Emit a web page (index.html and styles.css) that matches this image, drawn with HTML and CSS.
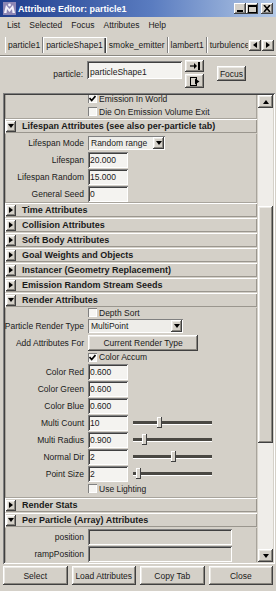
FILE: index.html
```html
<!DOCTYPE html>
<html lang="en">
<head>
  <meta charset="UTF-8" />
  <title>Attribute Editor: particle1</title>
  <link rel="stylesheet" href="styles.css">
</head>
<body>
<div class="window">

  <!-- Title bar -->
  <div class="titlebar">
    <svg class="app-icon" width="13" height="13" viewBox="0 0 13 13">
      <rect x="0" y="0" width="13" height="13" fill="#8c86b4"/>
      <path d="M1 11 L3 3 L6.5 7 L10 3 L12 11 L9.5 11 L9 7 L6.5 10 L4 7 L3.5 11 Z" fill="#f2f0fa"/>
      <circle cx="6.5" cy="3" r="1.4" fill="#f2f0fa"/>
    </svg>
    <span class="title">Attribute Editor: particle1</span>
    <div class="win-btns">
      <span class="wbtn"><svg width="8" height="7" viewBox="0 0 8 7"><rect x="1" y="5" width="6" height="2" fill="#000"/></svg></span>
      <span class="wbtn"><svg width="9" height="8" viewBox="0 0 9 8"><rect x="0.5" y="0.5" width="8" height="7" fill="none" stroke="#000"/><rect x="0" y="0" width="9" height="2" fill="#000"/></svg></span>
      <span class="wbtn close"><svg width="8" height="7" viewBox="0 0 8 7"><path d="M1 0 L7 7 M7 0 L1 7" stroke="#000" stroke-width="1.6"/></svg></span>
    </div>
  </div>

  <!-- Menu -->
  <div class="menubar">
    <span>List</span>
    <span>Selected</span>
    <span>Focus</span>
    <span>Attributes</span>
    <span>Help</span>
  </div>

  <!-- Node tabs -->
  <div class="tabbar">
    <div class="tabs">
      <span class="tab">particle1</span>
      <span class="tab active">particleShape1</span>
      <span class="tab">smoke_emitter</span>
      <span class="tab">lambert1</span>
      <span class="tab">turbulence</span>
    </div>
    <span class="btn tab-arrow"><i class="tri-l"></i></span>
    <span class="btn tab-arrow"><i class="tri-r"></i></span>
  </div>

  <div class="node-row">
    <span class="node-label">particle:</span>
    <span class="node-field">particleShape1</span>
    <div class="node-btns">
      <span class="btn icon-btn">
        <svg width="10" height="8" viewBox="0 0 10 8"><path d="M0 4 H5" stroke="#000" stroke-width="1.2"/><path d="M4 1 L7 4 L4 7 Z" fill="#000"/><rect x="8" y="0" width="2" height="8" fill="#000"/></svg>
      </span>
      <span class="btn icon-btn">
        <svg width="10" height="9" viewBox="0 0 10 9"><rect x="0.5" y="0.5" width="6" height="8" fill="none" stroke="#000"/><path d="M5 1.5 L9.5 4.5 L5 7.5 Z" fill="#000"/></svg>
      </span>
    </div>
    <span class="btn focus-btn">Focus</span>
  </div>

  <!-- Attribute panel -->
  <div class="panel">
    <div class="panel-view">
      <div class="panel-content">

        <div class="sec-body">
          <div class="cb-row"><span class="cb"><svg width="7" height="7" viewBox="0 0 7 7"><path d="M0.5 3 L2.7 5.5 L6.5 1" fill="none" stroke="#000" stroke-width="1.7"/></svg></span>Emission In World</div>
          <div class="cb-row"><span class="cb"></span>Die On Emission Volume Exit</div>
        </div>

        <div class="sec-head"><span class="btn exp"><i class="tri-d"></i></span>Lifespan Attributes (see also per-particle tab)</div>
        <div class="sec-body">
          <div class="attr-row">
            <span class="lbl">Lifespan Mode</span>
            <span class="dropdown"><span class="dd-text">Random range</span><span class="btn dd-btn"><i class="tri-d"></i></span></span>
          </div>
          <div class="attr-row"><span class="lbl">Lifespan</span><span class="field">20.000</span></div>
          <div class="attr-row"><span class="lbl">Lifespan Random</span><span class="field">15.000</span></div>
          <div class="attr-row"><span class="lbl">General Seed</span><span class="field">0</span></div>
        </div>

        <div class="sec-head"><span class="btn exp"><i class="tri-r"></i></span>Time Attributes</div>
        <div class="sec-head"><span class="btn exp"><i class="tri-r"></i></span>Collision Attributes</div>
        <div class="sec-head"><span class="btn exp"><i class="tri-r"></i></span>Soft Body Attributes</div>
        <div class="sec-head"><span class="btn exp"><i class="tri-r"></i></span>Goal Weights and Objects</div>
        <div class="sec-head"><span class="btn exp"><i class="tri-r"></i></span>Instancer (Geometry Replacement)</div>
        <div class="sec-head"><span class="btn exp"><i class="tri-r"></i></span>Emission Random Stream Seeds</div>

        <div class="sec-head"><span class="btn exp"><i class="tri-d"></i></span>Render Attributes</div>
        <div class="sec-body render">
          <div class="cb-row short"><span class="cb"></span>Depth Sort</div>
          <div class="attr-row">
            <span class="lbl">Particle Render Type</span>
            <span class="dropdown wide"><span class="dd-text">MultiPoint</span><span class="btn dd-btn"><i class="tri-d"></i></span></span>
          </div>
          <div class="attr-row">
            <span class="lbl">Add Attributes For</span>
            <span class="btn wide-btn">Current Render Type</span>
          </div>
          <div class="cb-row accum"><span class="cb"><svg width="7" height="7" viewBox="0 0 7 7"><path d="M0.5 3 L2.7 5.5 L6.5 1" fill="none" stroke="#000" stroke-width="1.7"/></svg></span>Color Accum</div>
          <div class="attr-row"><span class="lbl">Color Red</span><span class="field">0.600</span></div>
          <div class="attr-row"><span class="lbl">Color Green</span><span class="field">0.600</span></div>
          <div class="attr-row"><span class="lbl">Color Blue</span><span class="field">0.600</span></div>
          <div class="attr-row">
            <span class="lbl">Multi Count</span><span class="field">10</span>
            <span class="slider"><span class="thumb" style="left:24px"></span></span>
          </div>
          <div class="attr-row">
            <span class="lbl">Multi Radius</span><span class="field">0.900</span>
            <span class="slider"><span class="thumb" style="left:9px"></span></span>
          </div>
          <div class="attr-row">
            <span class="lbl">Normal Dir</span><span class="field">2</span>
            <span class="slider"><span class="thumb" style="left:38px"></span></span>
          </div>
          <div class="attr-row">
            <span class="lbl">Point Size</span><span class="field">2</span>
            <span class="slider"><span class="thumb" style="left:3px"></span></span>
          </div>
          <div class="cb-row"><span class="cb"></span>Use Lighting</div>
        </div>

        <div class="sec-head"><span class="btn exp"><i class="tri-r"></i></span>Render Stats</div>
        <div class="sec-head"><span class="btn exp"><i class="tri-d"></i></span>Per Particle (Array) Attributes</div>
        <div class="sec-body">
          <div class="attr-row"><span class="lbl">position</span><span class="array-field"></span></div>
          <div class="attr-row"><span class="lbl">rampPosition</span><span class="array-field"></span></div>
        </div>

      </div>
    </div>

    <div class="scrollbar">
      <span class="btn sb-btn"><i class="tri-u"></i></span>
      <div class="sb-track-top"></div>
      <div class="btn sb-thumb"></div>
      <div class="sb-track-bottom"></div>
      <span class="btn sb-btn"><i class="tri-d"></i></span>
    </div>
  </div>

  <!-- Bottom buttons -->
  <div class="bottom">
    <span class="btn">Select</span>
    <span class="btn">Load Attributes</span>
    <span class="btn">Copy Tab</span>
    <span class="btn">Close</span>
  </div>

</div>
</body>
</html>
```

FILE: styles.css
```css
* {
  margin: 0;
  padding: 0;
  box-sizing: border-box;
}

body {
  width: 276px;
  height: 591px;
  overflow: hidden;
  background: #d4d0c8;
  font-family: "Liberation Sans", Arial, sans-serif;
  font-size: 8.5px;
  color: #1a1a1a;
}

.window {
  height: 591px;
  display: flex;
  flex-direction: column;
  background: #d4d0c8;
}

/* generic raised button */
.btn {
  display: flex;
  align-items: center;
  justify-content: center;
  background: #d4d0c8;
  white-space: nowrap;
  box-shadow: inset -1px -1px #404040, inset 1px 1px #ffffff, inset -2px -2px #8a8780, inset 2px 2px #ebe9e4;
}

/* little triangles */
.tri-r, .tri-l, .tri-d, .tri-u {
  display: block;
  width: 0;
  height: 0;
}
.tri-r { border-left: 4px solid #000; border-top: 3.5px solid transparent; border-bottom: 3.5px solid transparent; }
.tri-l { border-right: 4px solid #000; border-top: 3.5px solid transparent; border-bottom: 3.5px solid transparent; }
.tri-d { border-top: 4px solid #000; border-left: 3.5px solid transparent; border-right: 3.5px solid transparent; }
.tri-u { border-bottom: 4px solid #000; border-left: 3.5px solid transparent; border-right: 3.5px solid transparent; }

/* title bar */
.titlebar {
  height: 17px;
  display: flex;
  align-items: center;
  padding: 0 3px 0 3px;
  background: linear-gradient(to right, #1e3c8c, #5a7cc0 55%, #b4c9e6);
  color: #fff;
  font-weight: bold;
  font-size: 9px;
}

.app-icon { margin-right: 2px; }

.title { flex: 1; }

.win-btns { display: flex; }

.wbtn {
  width: 12px;
  height: 11px;
  display: flex;
  align-items: center;
  justify-content: center;
  background: #d4d0c8;
  box-shadow: inset -1px -1px #404040, inset 1px 1px #ffffff, inset -2px -2px #808080;
}

.wbtn.close { margin-left: 3px; }

/* menu */
.menubar {
  height: 15px;
  display: flex;
  align-items: center;
  padding-left: 7px;
  gap: 9px;
}

/* tabs */
.tabbar {
  display: flex;
  align-items: center;
  height: 16px;
  margin: 5px 2px 0 5px;
}

.tabs {
  display: flex;
  width: 243px;
  height: 16px;
  overflow: hidden;
}

.tab {
  display: flex;
  align-items: center;
  height: 16px;
  padding: 0 3px;
  white-space: nowrap;
  box-shadow: inset -1px 0 #808080, inset 1px 0 #ffffff;
}

.tab.active {
  box-shadow: inset 1px 1px #ffffff, inset -1px 0 #404040, inset -2px 0 #808080;
  background: #dcd9d2;
}

.tab-arrow {
  width: 12px;
  height: 11px;
  margin-left: 1px;
}

.node-row {
  height: 38px;
  display: flex;
  align-items: flex-start;
  margin-top: 2px;
  padding-top: 4px;
  border-top: 1px solid #8a8780;
  box-shadow: inset 0 1px #ffffff;
}

.node-label {
  width: 83px;
  text-align: right;
  margin-top: 9px;
}

.node-field {
  width: 95px;
  height: 18px;
  margin: 1px 0 0 4px;
  padding: 6px 0 0 3px;
  background: #f4f3f0;
  box-shadow: inset 1px 1px #808080, inset -1px -1px #ffffff, inset 2px 2px #404040;
}

.node-btns {
  display: flex;
  flex-direction: column;
  gap: 2px;
  margin-left: 3px;
}

.icon-btn {
  width: 19px;
  height: 12px;
}

.icon-btn + .icon-btn { height: 14px; }

.focus-btn {
  width: 29px;
  height: 15px;
  margin: 6px 0 0 13px;
}

/* scrolling attribute panel */
.panel {
  height: 471px;
  display: flex;
  margin: 0 1px 0 3px;
  padding: 2px;
  box-shadow: inset 1px 1px #808080, inset -1px -1px #ffffff, inset 2px 2px #404040, inset -2px -2px #d4d0c8;
}

.panel-view {
  flex: 1;
  overflow: hidden;
}

.panel-content {
  margin-top: -3px;
}

.sec-body {
  margin-right: 1px;
  padding-bottom: 1px;
  box-shadow: inset 1px 0 #a8a49c, inset -1px 0 #a8a49c, inset 0 -1px #a8a49c;
}

.sec-body.render { padding-bottom: 3px; }

.sec-head {
  height: 14px;
  margin: 0 1px 1px 0;
  display: flex;
  align-items: center;
  font-weight: bold;
  font-size: 9px;
  box-shadow: inset 1px 1px #ffffff, inset -1px -1px #9a968e;
}

.exp {
  width: 10px;
  height: 11px;
  margin: 0 6px 0 1px;
}

.cb-row {
  height: 13px;
  display: flex;
  align-items: center;
  padding-left: 83px;
  white-space: nowrap;
}

.cb-row.short { height: 9px; }
.cb-row.accum { height: 12px; }

.cb {
  width: 9px;
  height: 9px;
  margin-right: 2px;
  display: flex;
  align-items: center;
  justify-content: center;
  background: #f6f5f2;
  box-shadow: inset 1px 1px #808080, inset -1px -1px #ffffff;
}

.attr-row {
  height: 17px;
  display: flex;
  align-items: center;
}

.lbl {
  width: 79px;
  flex-shrink: 0;
  display: flex;
  justify-content: flex-end;
  white-space: nowrap;
  margin-right: 4px;
}

.field {
  width: 40px;
  height: 16px;
  display: flex;
  align-items: center;
  padding-left: 2px;
  background: #f4f3f0;
  box-shadow: inset 1px 1px #808080, inset -1px -1px #ffffff, inset 2px 2px #404040;
}

.array-field {
  width: 144px;
  height: 16px;
  background: #d4d0c8;
  box-shadow: inset 1px 1px #808080, inset -1px -1px #ffffff, inset 2px 2px #404040;
}

.dropdown {
  width: 77px;
  height: 14px;
  display: flex;
  align-items: center;
  padding: 1px 1px 1px 3px;
  background: #eeede9;
  box-shadow: inset 1px 1px #808080, inset -1px -1px #ffffff;
}

.dropdown.wide { width: 95px; }

.dd-text { flex: 1; }

.dd-btn {
  width: 11px;
  height: 12px;
}

.wide-btn {
  width: 110px;
  height: 16px;
}

.slider {
  position: relative;
  width: 79px;
  height: 11px;
  margin-left: 5px;
}

.slider::before {
  content: "";
  position: absolute;
  left: 0;
  right: 0;
  top: 4px;
  height: 3px;
  background: #4a4843;
  border-bottom: 1px solid #ffffff;
}

.thumb {
  position: absolute;
  top: 0;
  width: 5px;
  height: 11px;
  background: #d4d0c8;
  box-shadow: inset -1px -1px #404040, inset 1px 1px #ffffff;
}

/* scrollbar */
.scrollbar {
  width: 15px;
  display: flex;
  flex-direction: column;
  background: #efede9;
}

.sb-btn {
  height: 13px;
}

.sb-track-top { height: 98px; }

.sb-thumb { height: 237px; }

.sb-track-bottom { flex: 1; }

/* bottom buttons */
.bottom {
  display: grid;
  grid-template-columns: repeat(4, 1fr);
  gap: 4px;
  height: 19px;
  margin: 2px 3px 0 3px;
}
```
